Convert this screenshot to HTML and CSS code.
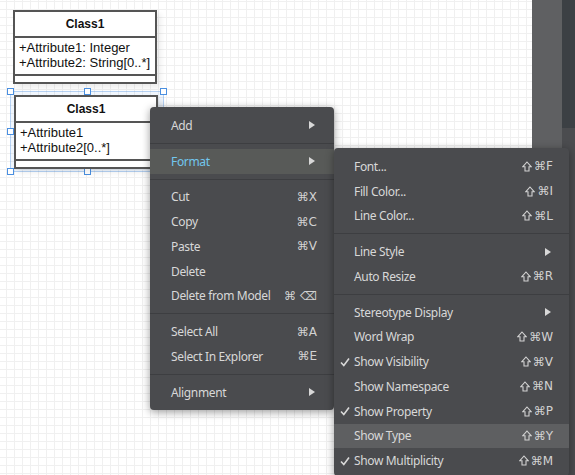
FILE: index.html
```html
<!DOCTYPE html>
<html lang="en">
<head>
  <meta charset="UTF-8">
  <title>Diagram editor</title>
  <link rel="stylesheet" href="styles.css">
</head>
<body>
  <div class="app">
    <div class="canvas">
      <!-- first class node -->
      <div class="uml-class node-a">
        <div class="uml-name">Class1</div>
        <div class="uml-attrs">
          <div>+Attribute1: Integer</div>
          <div>+Attribute2: String[0..*]</div>
        </div>
        <div class="uml-ops"></div>
      </div>

      <!-- selected class node -->
      <div class="selection">
        <span class="handle h-tl"></span>
        <span class="handle h-tc"></span>
        <span class="handle h-tr"></span>
        <span class="handle h-ml"></span>
        <span class="handle h-mr"></span>
        <span class="handle h-bl"></span>
        <span class="handle h-bc"></span>
        <span class="handle h-br"></span>
      </div>
      <div class="uml-class node-b">
        <div class="uml-name">Class1</div>
        <div class="uml-attrs">
          <div>+Attribute1</div>
          <div>+Attribute2[0..*]</div>
        </div>
        <div class="uml-ops"></div>
      </div>
    </div>
    <div class="side-panel"></div>
    <div class="rail">
      <div class="rail-top"></div>
    </div>
  </div>

  <!-- context menu -->
  <div class="menu main-menu">
    <div class="item"><span class="label">Add</span><span class="arrow"></span></div>
    <div class="sep"></div>
    <div class="item active"><span class="label">Format</span><span class="arrow"></span></div>
    <div class="sep"></div>
    <div class="item"><span class="label">Cut</span><span class="key">⌘X</span></div>
    <div class="item"><span class="label">Copy</span><span class="key">⌘C</span></div>
    <div class="item"><span class="label">Paste</span><span class="key">⌘V</span></div>
    <div class="item"><span class="label">Delete</span></div>
    <div class="item"><span class="label">Delete from Model</span><span class="key">⌘<span class="gap"></span>⌫</span></div>
    <div class="sep"></div>
    <div class="item"><span class="label">Select All</span><span class="key">⌘A</span></div>
    <div class="item"><span class="label">Select In Explorer</span><span class="key">⌘E</span></div>
    <div class="sep"></div>
    <div class="item"><span class="label">Alignment</span><span class="arrow"></span></div>
  </div>

  <!-- Format submenu -->
  <div class="menu sub-menu">
    <div class="item"><span class="check"></span><span class="label">Font...</span><span class="key"><svg class="shift" viewBox="0 0 10 11"><path d="M5 1 L9.3 5.8 H7 V10 H3 V5.8 H0.7 Z"/></svg>⌘F</span></div>
    <div class="item"><span class="check"></span><span class="label">Fill Color...</span><span class="key"><svg class="shift" viewBox="0 0 10 11"><path d="M5 1 L9.3 5.8 H7 V10 H3 V5.8 H0.7 Z"/></svg>⌘I</span></div>
    <div class="item"><span class="check"></span><span class="label">Line Color...</span><span class="key"><svg class="shift" viewBox="0 0 10 11"><path d="M5 1 L9.3 5.8 H7 V10 H3 V5.8 H0.7 Z"/></svg>⌘L</span></div>
    <div class="sep"></div>
    <div class="item"><span class="check"></span><span class="label">Line Style</span><span class="arrow"></span></div>
    <div class="item"><span class="check"></span><span class="label">Auto Resize</span><span class="key"><svg class="shift" viewBox="0 0 10 11"><path d="M5 1 L9.3 5.8 H7 V10 H3 V5.8 H0.7 Z"/></svg>⌘R</span></div>
    <div class="sep"></div>
    <div class="item"><span class="check"></span><span class="label">Stereotype Display</span><span class="arrow"></span></div>
    <div class="item"><span class="check"></span><span class="label">Word Wrap</span><span class="key"><svg class="shift" viewBox="0 0 10 11"><path d="M5 1 L9.3 5.8 H7 V10 H3 V5.8 H0.7 Z"/></svg>⌘W</span></div>
    <div class="item"><span class="check"><svg viewBox="0 0 10 10" width="10" height="10"><polyline points="1,5.5 3.8,8.5 9,1.5" fill="none" stroke="#d8d8d8" stroke-width="1.6"/></svg></span><span class="label">Show Visibility</span><span class="key"><svg class="shift" viewBox="0 0 10 11"><path d="M5 1 L9.3 5.8 H7 V10 H3 V5.8 H0.7 Z"/></svg>⌘V</span></div>
    <div class="item"><span class="check"></span><span class="label">Show Namespace</span><span class="key"><svg class="shift" viewBox="0 0 10 11"><path d="M5 1 L9.3 5.8 H7 V10 H3 V5.8 H0.7 Z"/></svg>⌘N</span></div>
    <div class="item"><span class="check"><svg viewBox="0 0 10 10" width="10" height="10"><polyline points="1,5.5 3.8,8.5 9,1.5" fill="none" stroke="#d8d8d8" stroke-width="1.6"/></svg></span><span class="label">Show Property</span><span class="key"><svg class="shift" viewBox="0 0 10 11"><path d="M5 1 L9.3 5.8 H7 V10 H3 V5.8 H0.7 Z"/></svg>⌘P</span></div>
    <div class="item hover"><span class="check"></span><span class="label">Show Type</span><span class="key"><svg class="shift" viewBox="0 0 10 11"><path d="M5 1 L9.3 5.8 H7 V10 H3 V5.8 H0.7 Z"/></svg>⌘Y</span></div>
    <div class="item"><span class="check"><svg viewBox="0 0 10 10" width="10" height="10"><polyline points="1,5.5 3.8,8.5 9,1.5" fill="none" stroke="#d8d8d8" stroke-width="1.6"/></svg></span><span class="label">Show Multiplicity</span><span class="key"><svg class="shift" viewBox="0 0 10 11"><path d="M5 1 L9.3 5.8 H7 V10 H3 V5.8 H0.7 Z"/></svg>⌘M</span></div>
  </div>
</body>
</html>
```

FILE: styles.css
```css
body {
  margin: 0;
  width: 575px;
  height: 475px;
  overflow: hidden;
  font-family: "Noto Sans", "DejaVu Sans", sans-serif;
  background-color: #4a4b4e;
}
.app {
  display: flex;
  height: 475px;
}
.canvas {
  position: relative;
  width: 532px;
  background-color: #fff;
  background-image:
    linear-gradient(to right, #f0f0f0 1px, transparent 1px),
    linear-gradient(to bottom, #f0f0f0 1px, transparent 1px);
  background-size: 8px 8px;
  background-position: 6px 1px;
}
.side-panel {
  width: 30px;
  background-color: #5f6062;
}
.rail {
  flex: 1;
  background-color: #4b4c4f;
}
.rail-top {
  height: 128px;
  background-color: #3c4044;
}

/* class nodes */
.uml-class {
  position: absolute;
  width: 140px;
  background-color: #fff;
  border: 2px solid #555;
  box-shadow: 4px 4px 5px rgba(0, 0, 0, 0.07);
  font-family: "Liberation Sans", Arial, sans-serif;
  color: #111;
}
.node-a {
  left: 13px;
  top: 10px;
}
.node-b {
  left: 14px;
  top: 95px;
}
.uml-name {
  height: 24px;
  line-height: 25px;
  text-align: center;
  font-weight: bold;
  font-size: 12px;
  border-bottom: 2px solid #555;
}
.uml-attrs {
  height: 34px;
  padding: 2px 4px 0;
  font-size: 13px;
  line-height: 15px;
  border-bottom: 2px solid #555;
}
.uml-ops {
  height: 6px;
}
.selection {
  position: absolute;
  left: 10px;
  top: 91px;
  width: 152px;
  height: 79px;
  background-color: rgba(90, 150, 230, 0.09);
  border: 1px solid rgba(74, 144, 226, 0.35);
}
.handle {
  position: absolute;
  width: 5px;
  height: 5px;
  background-color: #fff;
  border: 1px solid #4a8fe0;
}
.h-tl { left: -4px; top: -4px; }
.h-tc { left: 73px; top: -4px; }
.h-tr { left: 149px; top: -4px; }
.h-ml { left: -4px; top: 36px; }
.h-mr { left: 149px; top: 36px; }
.h-bl { left: -4px; top: 76px; }
.h-bc { left: 73px; top: 76px; }
.h-br { left: 149px; top: 76px; }

/* menus */
.menu {
  position: absolute;
  background-color: #4a4b4e;
  border-radius: 4px;
  box-shadow: 0 2px 8px rgba(0, 0, 0, 0.4);
  color: #d8d8d8;
  font-size: 12px;
  letter-spacing: -0.35px;
}
.main-menu {
  left: 150px;
  top: 107px;
  width: 184px;
  padding: 6px 0 5px;
}
.sub-menu {
  left: 334px;
  top: 148px;
  width: 235px;
  padding: 6px 0 3px;
}
.item {
  display: flex;
  align-items: center;
  height: 24.75px;
  padding: 0 17px 0 21px;
}
.sub-menu .item {
  padding: 0 16px 0 6px;
}
.item .label {
  flex: 1;
}
.item.active {
  background-color: #585a58;
  color: #72c6ee;
}
.item.hover {
  background-color: #5e5f61;
}
.check {
  width: 14px;
  display: flex;
  align-items: center;
}
.key {
  display: flex;
  align-items: center;
  font-family: "DejaVu Sans", sans-serif;
  font-size: 12px;
  letter-spacing: 0;
  color: #d2d2d2;
}
.key .gap {
  width: 4px;
}
.shift {
  width: 10px;
  height: 11px;
  margin-right: 2px;
  fill: none;
  stroke: #d2d2d2;
  stroke-width: 1.1;
}
.arrow {
  width: 0;
  height: 0;
  margin-right: 2px;
  border-top: 4px solid transparent;
  border-bottom: 4px solid transparent;
  border-left: 6px solid #d8d8d8;
}
.sep {
  height: 11px;
  display: flex;
  align-items: center;
}
.sep::before {
  content: "";
  flex: 1;
  height: 1px;
  background-color: #3d3e41;
}
```
